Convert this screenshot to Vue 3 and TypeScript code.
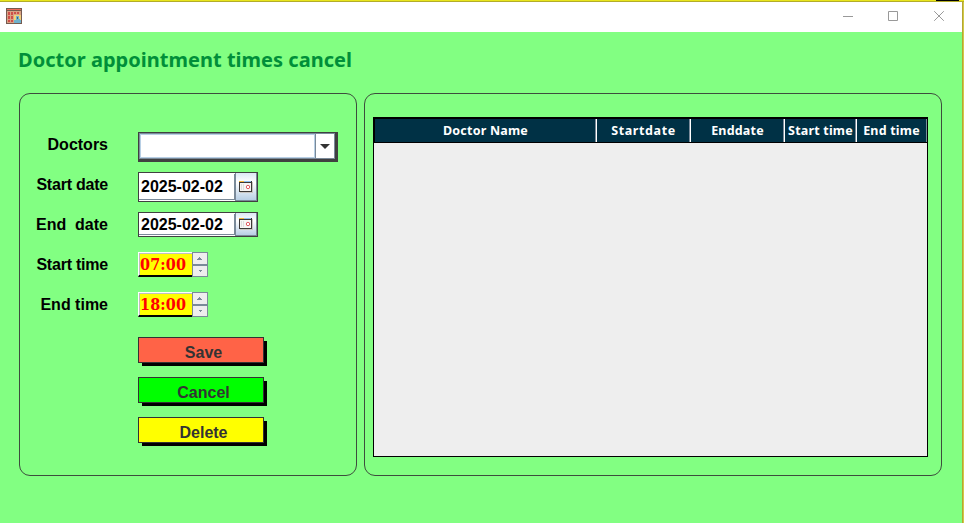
<script setup lang="ts">
interface Field { label: string; kind: 'combo' | 'date' | 'time'; value: string; cls: string }
const fields: Field[] = [
  { label: 'Doctors', kind: 'combo', value: '', cls: 'tall' },
  { label: 'Start date', kind: 'date', value: '2025-02-02', cls: 'tall' },
  { label: 'End  date', kind: 'date', value: '2025-02-02', cls: '' },
  { label: 'Start time', kind: 'time', value: '07:00', cls: '' },
  { label: 'End time', kind: 'time', value: '18:00', cls: '' },
]
const actions = ['Save', 'Cancel', 'Delete']
const columns = ['Doctor Name', 'Startdate', 'Enddate', 'Start time', 'End time']
</script>

<template>
  <div class="window">
    <div class="edge"><i></i></div>
    <header class="titlebar">
      <svg class="app" width="16" height="16" viewBox="0 0 16 16" shape-rendering="crispEdges">
        <rect width="16" height="16" fill="#755b50" />
        <rect x="1" y="1" width="14" height="1" fill="#ee6a58" />
        <rect x="1" y="3" width="14" height="12" fill="#d9a184" />
        <path d="M2 4h2v3H2zM5 4h2v3H5zM8 4h2v2H8zM11 4h2v2h-2zM2 8h2v3H2zM5 8h2v3H5zM2 12h2v2H2zM5 12h2v2H5z" fill="#cf4f48" />
        <rect x="8" y="7" width="7" height="8" fill="#f2d07c" />
        <path d="M10 8h3v3h1v1h1v3H8v-3h2z" fill="#6fb2cc" />
        <rect x="11" y="9" width="1" height="2" fill="#38627d" />
      </svg>
      <svg class="controls" width="102" height="12" viewBox="0 0 102 12" fill="none" stroke="#999">
        <path d="M0 5.500h10" /><path d="M45.500 .5h9v9h-9z" /><path d="M91.200 .2l9.600 9.600M100.800 .2l-9.600 9.600" />
      </svg>
    </header>
    <h1>Doctor appointment times cancel</h1>
    <main>
      <section class="panel form">
        <div v-for="f in fields" :key="f.label" class="row">
          <label :class="{ tight: f.label.startsWith('Start') }">{{ f.label }}</label>
          <div v-if="f.kind === 'combo'" class="combo">
            <div class="blank"></div>
            <div class="drop"><svg width="10" height="5" viewBox="0 0 10 5"><path d="M0 0h10L5 5z" fill="#333" /></svg></div>
          </div>
          <div v-else-if="f.kind === 'date'" class="date" :class="f.cls">
            <div class="datevalue"><span>{{ f.value }}</span></div>
            <div class="pick">
              <svg width="14" height="12" viewBox="0 0 14 12" shape-rendering="crispEdges">
                <path d="M1 1h13v11H1z" fill="#c9c5c1" />
                <path d="M0 0h13v11H0z" fill="#3b3836" />
                <path d="M1 2h11v8H1z" fill="#f7f5f3" />
                <path d="M0 0h5v1H0z" fill="#f5b83d" /><path d="M5 0h7v1H5z" fill="#8fc0ed" />
                <path d="M2 3h1v6H2zM4 3h1v6H4z" fill="#ddd" />
                <circle cx="9" cy="6" r="1.700" fill="#fff" stroke="#e05a62" shape-rendering="auto" />
              </svg>
            </div>
          </div>
          <div v-else class="time">
            <div class="timevalue"><span>{{ f.value }}</span></div>
            <div class="steps">
              <div><svg width="5" height="3" viewBox="0 0 5 3" shape-rendering="crispEdges"><path d="M2 0h1v1h1v1h1v1H0V2h1V1h1z" fill="#7a8a99" /></svg></div>
              <div><svg width="3" height="2" viewBox="0 0 3 2" shape-rendering="crispEdges"><path d="M0 0h3v1H2v1H1V1H0z" fill="#7a8a99" /></svg></div>
            </div>
          </div>
        </div>
        <div class="actions">
          <button v-for="a in actions" :key="a" :class="a.toLowerCase()">{{ a }}</button>
        </div>
      </section>
      <section class="panel list">
        <div class="table">
          <div class="head"><div v-for="c in columns" :key="c"><span>{{ c }}</span></div></div>
        </div>
      </section>
    </main>
  </div>
</template>

<style>
body { margin: 0; overflow: hidden; }
</style>
<style scoped>
* { box-sizing: border-box; }
.window { width: 964px; height: 523px; background: linear-gradient(90deg, #b5a632 50%, #d1c947 50%) right / 2px 100% no-repeat #82ff82; display: flex; flex-direction: column; font-family: "Liberation Sans", Arial, sans-serif; }
.edge { height: 2px; background: #e9e51d; border-bottom: 1px solid #b3ad29; display: flex; justify-content: flex-end; padding-right: 5px; flex: none; }
.edge i { width: 23px; height: 1px; background: #000; }
.titlebar { height: 30px; margin-right: 2px; background: #fff; display: flex; justify-content: space-between; padding: 6px 17px 0 6px; flex: none; }
.controls { margin-top: 3px; }
h1 { margin: 14px 0 0 18px; height: 28px; font: bold 20px/28px "Noto Sans", sans-serif; color: #008f39; white-space: nowrap; letter-spacing: .02px; }
main { margin: 19px 0 0 19px; display: flex; gap: 7px; }
.panel { height: 383px; border: 1px solid #3d4d3d; border-radius: 11px; }
.form { width: 338px; padding-top: 38px; }
.list { width: 578px; padding: 23px 0 0 8px; }
.row { height: 40px; display: flex; align-items: flex-start; }
label { width: 88px; margin-right: 30px; line-height: 25px; text-align: right; font-size: 16px; font-weight: bold; white-space: pre; }
label.tight { letter-spacing: -.22px; }
.combo { width: 200px; height: 30px; border: 1px solid #404040; border-right-width: 3px; border-bottom-width: 3px; display: flex; background: #fff; }
.blank { width: 176px; border: 1px solid #7a8a99; border-right: 0; box-shadow: inset 0 0 0 1px #b8cfe5; }
.drop { flex: 1; border: 1px solid #7a8a99; display: grid; place-items: center; }
.date { width: 120px; height: 25px; border: 1px solid #404040; background: #fff; display: flex; }
.date.tall { height: 30px; }
.datevalue { width: 96px; padding: 1px 0 0 2px; border: solid #7a8a99; border-width: 0 1px 1px 0; margin: 1px 0 1px 0; display: flex; align-items: center; font-size: 16px; font-weight: bold; }
.tall .datevalue { padding-top: 0; }
.pick { width: 22px; margin-left: auto; border: 1px solid #7a8a99; border-width: 0 1px 1px 1px; background: linear-gradient(#dce8f4, #fff 35%, #b8cfe5); display: grid; place-items: center; }
.time { display: flex; width: 70px; height: 25px; }
.timevalue { width: 54px; background: #ff0; border-top: 1px solid #fff; border-left: 1px solid #fff; border-bottom: 2px solid #000; box-shadow: inset 1px 1px #c0c0c0; color: #f00; font: bold 16px/23px "DejaVu Serif Condensed", "DejaVu Serif", serif; font-stretch: condensed; letter-spacing: .15px; padding-left: 1px; }
.steps { width: 16px; display: flex; flex-direction: column; }
.steps div { height: 13px; border: 1px solid #7a8a99; background: #eee; display: flex; align-items: center; justify-content: center; padding-right: 2px; }
.steps div + div { height: 12px; padding-right: 0; }
.actions { margin: 5px 0 0 118px; display: grid; gap: 14px; justify-items: start; }
button { width: 126px; height: 26px; padding: 5px 0 0 5px; border: 1px solid #333; border-radius: 0; box-shadow: 3.5px 3.5px 0 -.5px #000; font: bold 16px/19px "Liberation Sans", Arial, sans-serif; color: #333; }
.save { background: #ff6347; }
.cancel { background: #0f0; }
.delete { background: #ff0; }
.table { width: 555px; height: 340px; border: 1px solid #000; background: #eee; }
.head { height: 25px; border: solid #000; border-width: 1px 0 1px 1px; background: #003145; display: grid; grid-template-columns: 222px 94px 94px 72px 1fr; }
.head div { border-right: 1px solid #fff; box-shadow: inset -1px 0 #7a8a99; text-align: center; color: #fff; font: bold 12.500px/23px "Noto Sans", sans-serif; letter-spacing: .2px; white-space: nowrap; }
.head div:nth-child(2) { letter-spacing: .6px; }
.head div:last-child { border-color: #778f9a; box-shadow: none; }
</style>
